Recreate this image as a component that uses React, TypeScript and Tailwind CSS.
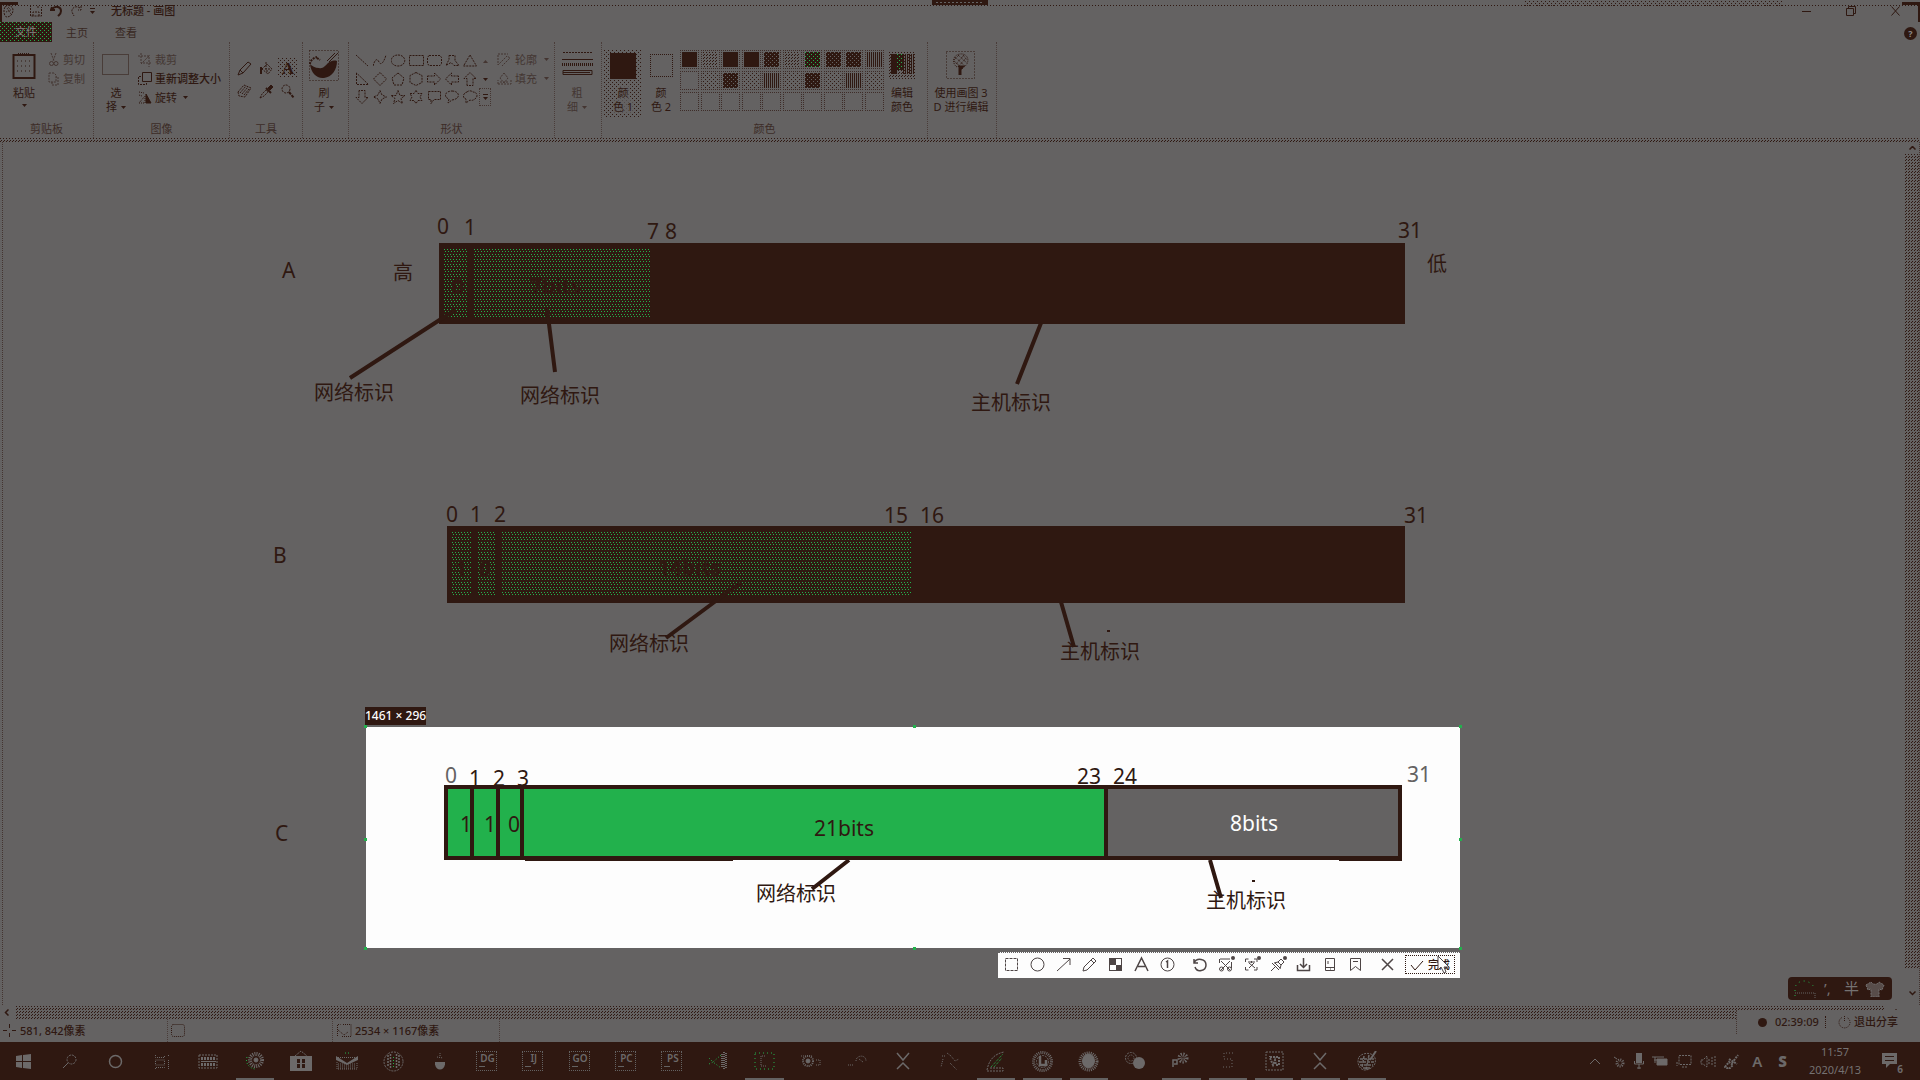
import React from "react";

const UI_FONT = "font-['Noto_Sans','Noto_Sans_CJK_SC',sans-serif]";

const DOTS_SPARSE =
  "[background-image:conic-gradient(at_1px_1px,#0000_75%,#2f1811_0),conic-gradient(at_1px_1px,#0000_75%,#2f1811_0)] [background-size:4px_4px] [background-position:0_0,2px_2px]";
const DOTS_MID =
  "[background-image:conic-gradient(at_1px_1px,#0000_75%,#2f1811_0),conic-gradient(at_1px_1px,#0000_75%,#2f1811_0)] [background-size:3px_3px] [background-position:0_0,1px_2px]";
const DOTS_DENSE =
  "bg-[#2f1811] [background-image:conic-gradient(at_1px_1px,#0000_75%,#646262_0),conic-gradient(at_1px_1px,#0000_75%,#646262_0)] [background-size:4px_4px] [background-position:0_0,2px_2px]";
const DOTS_GREEN =
  "bg-[#2f1811] [background-image:conic-gradient(at_1px_1px,#0000_75%,#22b14c_0),conic-gradient(at_1px_1px,#0000_75%,#22b14c_0)] [background-size:3px_5px] [background-position:0_0,1px_2px]";
const DOTS_GREEN_SPARSE =
  "bg-[#2f1811] [background-image:conic-gradient(at_1px_1px,#0000_75%,#22b14c_0),conic-gradient(at_1px_1px,#0000_75%,#22b14c_0)] [background-size:4px_4px] [background-position:0_0,2px_2px]";
const STRIPES =
  "[background-image:linear-gradient(90deg,#2f1811_1px,#0000_1px)] [background-size:2px_2px]";
const DOTTED_RULE =
  "[background-image:linear-gradient(90deg,#2f1811_1px,#0000_1px)] [background-size:3px_1px]";

type SvgProps = { w: number; h: number; children: React.ReactNode; className?: string };

function Ico({ w, h, children, className = "" }: SvgProps) {
  return (
    <svg
      width={w}
      height={h}
      viewBox={`0 0 ${w} ${h}`}
      fill="none"
      stroke="currentColor"
      aria-hidden="true"
      className={`shrink-0 ${className}`}
    >
      {children}
    </svg>
  );
}

function Caret() {
  return (
    <Ico w={5} h={3}>
      <path d="M0 0h5L2.500 3z" fill="currentColor" stroke="none" />
    </Ico>
  );
}

/* ---------- Title bar and tabs ---------- */

function TitleBar() {
  return (
    <header className="relative flex h-[22px] items-center pl-[3px] pr-5">
      <div className={`absolute inset-x-0 top-[5px] h-px ${DOTTED_RULE}`} />
      <div className="absolute left-0 top-0.5 h-5 w-[18px] border-l-2 border-t-[3px] border-[#2f1811]" />
      <div className="absolute right-0 top-0.5 h-5 w-[18px] border-r-2 border-t-[3px] border-[#2f1811]" />
      <div className="absolute left-[932px] top-0 h-[5px] w-14 bg-[#2f1811]">
        <div className="mx-1 mt-0.5 h-px [background-image:linear-gradient(90deg,#646262_2px,#0000_2px)] [background-size:4px_1px]" />
      </div>
      <div className={`absolute left-[1525px] top-px h-[5px] w-[257px] ${DOTS_SPARSE}`} />
      <div className="flex items-center">
        <Ico w={16} h={14}>
          <path d="M2 3c3-3 8-1 8 3s-3 7-6 7-4-7-2-10z" strokeDasharray="2 1" />
          <path d="M4 4l4 6M3 8l5-2M5 3l3 3" strokeDasharray="1 1" />
        </Ico>
        <button aria-label="保存" className="ml-2.5">
          <Ico w={14} h={14}>
            <path d="M1.500 1v11h11V3M4 12V8h6v4M9 2v3" strokeDasharray="2 1" />
          </Ico>
        </button>
        <button aria-label="撤消" className="ml-[7px]">
          <Ico w={13} h={14}>
            <path d="M2 3l-1 3 4 0M2 5c4-4 9-2 9 2 0 3-2 4-3 5" strokeWidth="2" />
          </Ico>
        </button>
        <button aria-label="恢复" className="ml-[7px]">
          <Ico w={13} h={14}>
            <path d="M11 2v4H8M10 4C6 1 1 4 2 8l2 4" strokeDasharray="2 1" />
          </Ico>
        </button>
        <button aria-label="自定义快速访问工具栏" className="ml-[7px]">
          <Ico w={5} h={6}>
            <path d="M0 .5h5" />
            <path d="M0 3h5L2.500 6z" fill="currentColor" stroke="none" />
          </Ico>
        </button>
        <h1 className="ml-4 text-[11px] font-medium leading-4">无标题 - 画图</h1>
      </div>
      <div className="ml-auto flex items-center gap-[35px]">
        <button aria-label="最小化">
          <Ico w={9} h={9}><path d="M0 4.500h9" /></Ico>
        </button>
        <button aria-label="还原">
          <Ico w={10} h={10}><path d="M.5 2.500h7v7h-7zM2.500 2V.500h7v7H8" /></Ico>
        </button>
        <button aria-label="关闭">
          <Ico w={9} h={10}><path d="M.5.5l8 9M8.500.5l-8 9" /></Ico>
        </button>
      </div>
    </header>
  );
}

function Tabs() {
  return (
    <nav className="flex h-5 items-center pr-[3px] text-[11px] leading-4">
      <button className={`h-full w-[52px] text-[#807d7d] ${DOTS_GREEN_SPARSE}`}>文件</button>
      <button className="ml-3.5 mt-0.5 opacity-80">主页</button>
      <button className="ml-[27px] mt-0.5 opacity-80">查看</button>
      <button
        aria-label="帮助"
        className="ml-auto mt-0.5 flex size-[13px] items-center justify-center rounded-full bg-[#2f1811] text-[9px] font-bold leading-none text-[#8a8787]"
      >
        ?
      </button>
    </nav>
  );
}

/* ---------- Ribbon ---------- */

type GroupProps = { label?: string; className: string; children: React.ReactNode };

function Group({ label, className, children }: GroupProps) {
  return (
    <section className={`flex shrink-0 flex-col border-r border-dotted border-[#2f1811]/50 ${className}`}>
      <div className="flex h-[79px] items-start pt-2">{children}</div>
      <h2 className="text-center text-[11px] leading-4 opacity-75">{label}</h2>
    </section>
  );
}

function Clipboard() {
  return (
    <Group label="剪贴板" className="w-[94px]">
      <button className="ml-3 flex w-6 flex-col items-center text-[11px] leading-3.5">
        <Ico w={24} h={32}>
          <rect x="1.500" y="5" width="21" height="23" strokeWidth="2" />
          <path d="M6 4.500h12" strokeDasharray="1 1" strokeWidth="3" />
          <path d="M5 11h14M5 16h14M5 21h14" strokeDasharray="1 3" />
        </Ico>
        <span className="mt-1">粘贴</span>
        <span className="mt-1"><Caret /></span>
      </button>
      <div className="ml-3 flex flex-col text-[11px] leading-4 opacity-60">
        <button className="flex h-[19px] items-center gap-1">
          <Ico w={11} h={15}>
            <path d="M3 1l3 8M8 1L5 9" strokeDasharray="2 1" />
            <circle cx="3.500" cy="11.500" r="2" />
            <circle cx="8" cy="11.500" r="2" />
          </Ico>
          剪切
        </button>
        <button className="flex h-[19px] items-center gap-1">
          <Ico w={11} h={14}>
            <path d="M1 1h5l2 2v7H1zM4 10v3h6V5H8" strokeDasharray="2 1" />
          </Ico>
          复制
        </button>
      </div>
    </Group>
  );
}

function ImageGroup() {
  return (
    <Group label="图像" className="w-[136px]">
      <button className="ml-2 flex w-7 flex-col items-center text-[11px] leading-3.5">
        <Ico w={28} h={32}>
          <rect x=".5" y="4.500" width="26" height="20" strokeDasharray="1 1" />
        </Ico>
        <span className="mt-1">选</span>
        <span className="flex items-center gap-1">择<Caret /></span>
      </button>
      <div className="ml-2 flex flex-col text-[11px] leading-4">
        <button className="flex h-[19px] items-center gap-0.5 opacity-60">
          <Ico w={15} h={14}>
            <path d="M3 0v10h11M0 3h11v11M3 11l9-9" strokeDasharray="2 1" />
          </Ico>
          裁剪
        </button>
        <button className="flex h-[19px] items-center gap-0.5 font-medium">
          <Ico w={15} h={14}>
            <path d="M4.500.5h9v9h-9z" />
            <path d="M3 4.500H.5v8h8V11" strokeDasharray="2 1" />
          </Ico>
          重新调整大小
        </button>
        <button className="flex h-[19px] items-center gap-0.5">
          <Ico w={15} h={14}>
            <path d="M8 12V3l5 9z" fill="currentColor" />
            <path d="M1 1l5 1M1 4l3 1M1 12h6V5z" strokeDasharray="1 1" />
          </Ico>
          旋转
          <span className="ml-1"><Caret /></span>
        </button>
      </div>
    </Group>
  );
}

function Tools() {
  return (
    <Group label="工具" className="w-[73px]">
      <div className="ml-1 mt-2 grid grid-cols-3 gap-x-0.5 gap-y-[3px]">
        <button aria-label="铅笔" className="flex size-5 items-center justify-center">
          <Ico w={15} h={15}><path d="M1 14l2-5 8-8 3 2-8 9zM3 9l3 3" /></Ico>
        </button>
        <button aria-label="用颜色填充" className="flex size-5 items-center justify-center">
          <Ico w={15} h={15}>
            <path d="M3 8l5-5 5 5-4 5zM7 1v7M6 8l5 0M7 10l3 0" strokeDasharray="2 1" />
            <path d="M2 6v7" strokeWidth="2" />
          </Ico>
        </button>
        <button
          aria-label="文本"
          className={`flex size-5 items-center justify-center font-['Liberation_Serif',serif] text-[17px] font-bold leading-none ${DOTS_SPARSE}`}
        >
          A
        </button>
        <button aria-label="橡皮擦" className="flex size-5 items-center justify-center">
          <Ico w={15} h={14}>
            <path d="M1 8l6-7 7 3-6 9-6-1z" strokeDasharray="2 1" />
            <path d="M3 9l6-7M5 10l6-7M7 11l5-6" strokeDasharray="2 1" />
          </Ico>
        </button>
        <button aria-label="颜色选取器" className="flex size-5 items-center justify-center">
          <Ico w={15} h={15}>
            <path d="M1 14l2-4 4-4 2 2-4 4z" strokeDasharray="2 1" />
            <path d="M9 4l3-3 2 2-3 3z" fill="currentColor" />
            <path d="M7 4l5 5" strokeWidth="2" />
          </Ico>
        </button>
        <button aria-label="放大镜" className="flex size-5 items-center justify-center">
          <Ico w={14} h={15}>
            <circle cx="5" cy="5" r="4" strokeDasharray="2 1" />
            <path d="M8 8l5 6" strokeWidth="2" strokeDasharray="3 1" />
          </Ico>
        </button>
      </div>
    </Group>
  );
}

function Brushes() {
  return (
    <Group className="w-[46px]">
      <button className="ml-1.5 flex w-[30px] flex-col items-center text-[11px] leading-3.5">
        <Ico w={30} h={32}>
          <rect x=".5" y=".5" width="29" height="30" strokeDasharray="1 2" />
          <path
            d="M1 14c1 9 7 15 14 14 8-1 13-8 13-17-4-1-6 0-9 2-3 3-5 6-9 5-4 0-7-2-9-4z"
            fill="currentColor"
            stroke="none"
          />
          <path d="M29 3l-9 9M26 3l-8 8" />
          <path d="M1 14c0-3 3-6 7-7M8 8l3 2" strokeWidth="2" strokeDasharray="2 1" />
        </Ico>
        <span className="mt-1">刷</span>
        <span className="flex items-center gap-1">子<Caret /></span>
      </button>
    </Group>
  );
}

const SHAPES: { name: string; d: string }[] = [
  { name: "直线", d: "M1 1l12 11" },
  { name: "曲线", d: "M0 12c2-7 4-8 6-4s5 0 7-7" },
  { name: "椭圆形", d: "M7 1c9 0 9 11 0 11s-9-11 0-11z" },
  { name: "矩形", d: "M.5 1.500h14v10H.5z" },
  { name: "圆角矩形", d: "M2 1.500h11l1.500 2v6l-1.500 2H2L.5 9.500v-6z" },
  { name: "多边形", d: "M4 1.500h6v5l4 5H9l-3-3-5 3 3-6z" },
  { name: "三角形", d: "M7 1l6.500 11H.5z" },
  { name: "直角三角形", d: "M1.500 1v11.500h12z" },
  { name: "菱形", d: "M7 .5l6.500 6.500L7 13.500.5 7z" },
  { name: "五边形", d: "M7 1l6 5-2 7H3L1 6z" },
  { name: "六边形", d: "M7 .5l6 3v7l-6 3-6-3v-7z" },
  { name: "右箭头", d: "M.5 4h7V1l6 6-6 6v-3h-7z" },
  { name: "左箭头", d: "M13.500 4h-7V1l-6 6 6 6v-3h7z" },
  { name: "上箭头", d: "M4 13.500v-7H1L7 .5l6 6h-3v7z" },
  { name: "下箭头", d: "M4 .5v7H1l6 6 6-6h-3v-7z" },
  { name: "四角星形", d: "M7 .5l2 4.500 4.500 2L9 9l-2 4.500L5 9 .5 7 5 5z" },
  { name: "五角星形", d: "M7 .5l2 5h5l-4 3 1.500 5L7 10.500l-4.500 3L4 8.500l-4-3h5z" },
  { name: "六角星形", d: "M7 .5l2 3h4l-2 3.500 2 3.500H9l-2 3-2-3H1L3 7 1 3.500h4z" },
  { name: "圆角矩形标注", d: "M1.500 1.500h12v8H7l-3 4v-4H1.500z" },
  { name: "椭圆形标注", d: "M7 1c8 0 9 8 0 9l-4 3 1-4C-2 7 0 1 7 1z" },
  { name: "云形标注", d: "M4 2c2-2 5-1 6 0 4 0 5 4 3 6s-4 3-6 2l-4 3 0-4C-1 8 0 3 4 2z" },
];

function ShapesGroup() {
  return (
    <Group label="形状" className="w-[206px]">
      <div className="ml-1 mt-0.5 grid grid-cols-7">
        {SHAPES.map((s) => (
          <button key={s.name} aria-label={s.name} className="flex h-[18px] w-[18px] items-center justify-center">
            <Ico w={15} h={14}>
              <path d={s.d} strokeDasharray="2 1" />
            </Ico>
          </button>
        ))}
      </div>
      <div className="mt-0.5 flex w-3 flex-col">
        <button aria-label="向上滚动" className="flex h-[18px] items-center justify-center opacity-60">
          <Ico w={5} h={3}><path d="M0 3h5L2.500 0z" fill="currentColor" stroke="none" /></Ico>
        </button>
        <button aria-label="向下滚动" className="flex h-[18px] items-center justify-center"><Caret /></button>
        <button
          aria-label="更多形状"
          className="flex h-[18px] items-center justify-center border border-dotted border-[#2f1811]/60"
        >
          <Ico w={5} h={6}>
            <path d="M0 .5h5" />
            <path d="M0 3h5L2.500 6z" fill="currentColor" stroke="none" />
          </Ico>
        </button>
      </div>
      <div className="ml-1.5 flex flex-col text-[11px] leading-4 opacity-60">
        <button className="flex h-[19px] items-center gap-[3px]">
          <Ico w={15} h={14}><path d="M1 1h10M1 2v10l9-9 3 2-8 8" strokeDasharray="2 1" /></Ico>
          轮廓
          <span className="ml-1"><Caret /></span>
        </button>
        <button className="flex h-[19px] items-center gap-[3px]">
          <Ico w={15} h={14}><path d="M7 1l4 5-4 5-4-5zM1 12h13V8M1 12V8M3 10h8" strokeDasharray="2 1" /></Ico>
          填充
          <span className="ml-1"><Caret /></span>
        </button>
      </div>
    </Group>
  );
}

function Thickness() {
  return (
    <Group className="w-[47px]">
      <button className="ml-1.5 flex w-8 flex-col items-center text-[11px] leading-3.5">
        <Ico w={31} h={32}>
          <path d="M1 2.500h30" strokeDasharray="2 1" />
          <path d="M0 9.500h31" />
          <path d="M0 14.500h31" strokeWidth="3" strokeDasharray="1 1" />
          <path d="M1 20.500h29v4H1z" />
          <path d="M1 22.500h27" strokeWidth="1" />
        </Ico>
        <span className="mt-1 opacity-60">粗</span>
        <span className="flex items-center gap-1 opacity-60">细<Caret /></span>
      </button>
    </Group>
  );
}

const EMPTY = "";
const SOLID = "bg-[#2f1811]";
const PALETTE: { name: string; fill: string }[] = [
  { name: "黑色", fill: SOLID },
  { name: "灰色-50%", fill: DOTS_MID },
  { name: "深红色", fill: SOLID },
  { name: "红色", fill: SOLID },
  { name: "橙色", fill: DOTS_DENSE },
  { name: "黄色", fill: DOTS_MID },
  { name: "绿色", fill: DOTS_GREEN_SPARSE },
  { name: "青绿", fill: DOTS_DENSE },
  { name: "靛蓝", fill: DOTS_DENSE },
  { name: "紫色", fill: STRIPES },
  { name: "白色", fill: EMPTY },
  { name: "灰色-25%", fill: DOTS_SPARSE },
  { name: "褐色", fill: DOTS_DENSE },
  { name: "玫瑰色", fill: DOTS_SPARSE },
  { name: "金色", fill: STRIPES },
  { name: "浅黄色", fill: DOTS_SPARSE },
  { name: "酸橙色", fill: DOTS_DENSE },
  { name: "淡青绿色", fill: DOTS_SPARSE },
  { name: "蓝灰色", fill: STRIPES },
  { name: "淡紫色", fill: DOTS_SPARSE },
  ...Array.from({ length: 10 }, (_, i) => ({ name: `自定义 ${i + 1}`, fill: EMPTY })),
];

function Colors() {
  return (
    <Group label="颜色" className="w-[326px]">
      <button className={`ml-0.5 flex h-[68px] w-[38px] flex-col items-center text-[11px] leading-3.5 ${DOTS_SPARSE}`}>
        <span className="mt-[3px] size-[26px] bg-[#2f1811]" />
        <span className="mt-[7px] bg-[#646262]/70">颜</span>
        <span className="bg-[#646262]/70">色 1</span>
      </button>
      <button className="ml-1 flex h-[68px] w-[30px] flex-col items-center text-[11px] leading-3.5">
        <span className="mt-1 size-[23px] border border-dotted border-[#2f1811]" />
        <span className="mt-[9px]">颜</span>
        <span>色 2</span>
      </button>
      <div className="ml-1 grid w-[205px] grid-cols-10 gap-y-0.5">
        {PALETTE.map((c) => (
          <button
            key={c.name}
            aria-label={c.name}
            className="size-[19px] border border-dotted border-[#2f1811]/70 p-px"
          >
            <span className={`block size-full ${c.fill}`} />
          </button>
        ))}
      </div>
      <button className="ml-[3px] flex w-7 flex-col items-center text-[11px] leading-3.5">
        <span className={`mb-[7px] mt-0.5 block size-[27px] p-0.5 ${DOTS_MID}`}>
          <span className="flex h-full">
            <span className="h-5 w-1.5 bg-[#2f1811]" />
            <span className={`h-4 w-1.5 ${DOTS_GREEN_SPARSE}`} />
            <span className={`h-5 w-[11px] ${STRIPES}`} />
          </span>
        </span>
        <span>编辑</span>
        <span>颜色</span>
      </button>
    </Group>
  );
}

function Paint3D() {
  return (
    <Group className="w-[69px]">
      <button className="ml-0.5 flex w-[62px] flex-col items-center text-[11px] leading-3.5">
        <Ico w={30} h={32}>
          <rect x=".5" y="1.500" width="28" height="27" strokeDasharray="1 2" />
          <path
            d="M11 17c-5-3-5-12 3-13s11 8 4 13M9 7l10 9M8 11l7 6M12 5l9 8M17 5l4 5M12 17l8-9M10 14l8-9M8 10l5-5"
            strokeDasharray="1 1"
          />
          <path d="M12 16h6l-2 3h-2z" fill="currentColor" />
          <path d="M14 18v7" strokeWidth="3" />
        </Ico>
        <span className="mt-1 whitespace-nowrap">使用画图 3</span>
        <span className="whitespace-nowrap">D 进行编辑</span>
      </button>
    </Group>
  );
}

function Ribbon() {
  return (
    <div>
      <div className="flex h-24">
        <Clipboard />
        <ImageGroup />
        <Tools />
        <Brushes />
        <ShapesGroup />
        <Thickness />
        <Colors />
        <Paint3D />
      </div>
      <div className={`h-1 ${DOTS_MID}`} />
    </div>
  );
}

/* ---------- Drawing canvas ---------- */

type Mark = { x: number; y: number; text: string; tone?: "grey" | "white"; strong?: boolean };

const MARKS: Mark[] = [
  { x: 282, y: 128, text: "A" },
  { x: 437, y: 84, text: "0" },
  { x: 464, y: 85, text: "1" },
  { x: 647, y: 89, text: "7" },
  { x: 665, y: 89, text: "8" },
  { x: 1398, y: 88, text: "31" },
  { x: 452, y: 144, text: "0", strong: true },
  { x: 530, y: 144, text: "7bits", strong: true },
  { x: 273, y: 413, text: "B" },
  { x: 446, y: 372, text: "0" },
  { x: 470, y: 372, text: "1" },
  { x: 494, y: 372, text: "2" },
  { x: 884, y: 373, text: "15" },
  { x: 920, y: 373, text: "16" },
  { x: 1404, y: 373, text: "31" },
  { x: 455, y: 426, text: "1", strong: true },
  { x: 479, y: 426, text: "0", strong: true },
  { x: 658, y: 425, text: "14bits", strong: true },
  { x: 275, y: 691, text: "C" },
];

const SELECTED_MARKS: Mark[] = [
  { x: 445, y: 633, text: "0", tone: "grey" },
  { x: 469, y: 636, text: "1" },
  { x: 493, y: 636, text: "2" },
  { x: 517, y: 636, text: "3" },
  { x: 1077, y: 634, text: "23" },
  { x: 1113, y: 634, text: "24" },
  { x: 1407, y: 632, text: "31", tone: "grey" },
  { x: 460, y: 682, text: "1" },
  { x: 484, y: 682, text: "1" },
  { x: 508, y: 682, text: "0" },
  { x: 814, y: 686, text: "21bits" },
  { x: 1230, y: 681, text: "8bits", tone: "white" },
];

const NOTES: Mark[] = [
  { x: 393, y: 131, text: "高" },
  { x: 1427, y: 122, text: "低" },
  { x: 314, y: 251, text: "网络标识" },
  { x: 520, y: 254, text: "网络标识" },
  { x: 971, y: 261, text: "主机标识" },
  { x: 609, y: 502, text: "网络标识" },
  { x: 1060, y: 510, text: "主机标识" },
  { x: 756, y: 752, text: "网络标识" },
  { x: 1206, y: 759, text: "主机标识" },
];

const TONES = { grey: "text-[#646262]", white: "text-[#fdfdfd]", dark: "text-[#2f1811]" };

function MarkText({ mark, size }: { mark: Mark; size: string }) {
  return (
    <span
      className={`absolute -translate-y-1/2 whitespace-nowrap leading-6 ${size} ${TONES[mark.tone ?? "dark"]} ${
        mark.strong ? "font-bold" : ""
      }`}
      style={{ left: mark.x, top: mark.y }}
    >
      {mark.text}
    </span>
  );
}

type Cell = { w: string; fill: string };

function BitBar({ place, cells }: { place: string; cells: Cell[] }) {
  return (
    <div className={`absolute flex bg-[#2f1811] ${place}`}>
      {cells.map((c, i) => (
        <span key={i} className={`h-full shrink-0 ${c.w} ${c.fill}`} />
      ))}
    </div>
  );
}

const HANDLES = [
  "left-[-2px] top-[-2px]",
  "left-1/2 top-[-2px]",
  "right-[-2px] top-[-2px]",
  "left-[-2px] top-1/2",
  "right-[-2px] top-1/2",
  "left-[-2px] bottom-[-2px]",
  "left-1/2 bottom-[-2px]",
  "right-[-2px] bottom-[-2px]",
];

function Dot({ x }: { x: number }) {
  return <circle cx={x} cy="2" r="2" fill="currentColor" stroke="none" />;
}

const SNIP_TOOLS: { name: string; icon: React.ReactNode; first?: boolean }[] = [
  { name: "矩形", icon: <rect x="1.500" y="2.500" width="12" height="12" strokeDasharray="3 1" /> },
  { name: "椭圆", icon: <circle cx="7.500" cy="8.500" r="6.500" /> },
  { name: "箭头", icon: <path d="M1 15L14 3M7 2.500h7V9" /> },
  { name: "画笔", icon: <path d="M1 15l1-4 9-9 3 3-9 9zM9 4l3 3" /> },
  {
    name: "马赛克",
    icon: (
      <>
        <rect x="1.500" y="2.500" width="12" height="12" />
        <path d="M2 3h6v6H2zM8 9h6v6H8z" fill="currentColor" stroke="none" />
      </>
    ),
  },
  { name: "文字", icon: <path d="M1 15L7.500 2 14 15M4 10.500h7" strokeWidth="1.500" /> },
  {
    name: "序号",
    icon: (
      <>
        <circle cx="7.500" cy="8.500" r="6.500" />
        <path d="M6 6l1.500-1v7" strokeWidth="1.500" />
      </>
    ),
  },
  { name: "撤销", first: true, icon: <path d="M2 3v4h4M2 7c3-6 12-4 12 2s-9 8-11 2" strokeWidth="1.500" /> },
  {
    name: "屏幕识图",
    icon: (
      <>
        <path d="M2 3h10M1.500 3v4M13.500 6v6M3 5l9 9M12 5l-9 9" />
        <circle cx="3.500" cy="13" r="2" />
        <circle cx="11.500" cy="13" r="2" />
        <Dot x={15} />
      </>
    ),
  },
  {
    name: "翻译",
    icon: (
      <>
        <path d="M1.500 6V3h3M10 3h3v3M1.500 11v3h3M10 14h3v-3M4 6h7M7.500 5v2M5 12l5-5M5 7l6 5" />
        <Dot x={15} />
      </>
    ),
  },
  {
    name: "钉在桌面",
    icon: (
      <>
        <path d="M1 15l5-5M2 7l7 7M4 7l4-1 3-3 3 3-3 3-1 4" />
        <path d="M5 7l5 5M8 6l3 3" />
        <Dot x={15} />
      </>
    ),
  },
  { name: "下载", icon: <path d="M7.500 2v9M4 8l3.500 3.500L11 8M1.500 9v5.500h12V9" strokeWidth="1.500" /> },
  { name: "发送到手机", icon: <path d="M3.500 2.500h9v12h-9zM3.500 11.500h9M8 13h1M6 5v3" /> },
  { name: "收藏", icon: <path d="M2.500 2.500h10v12l-5-4-5 4zM5 5.500h5" /> },
  { name: "取消", first: true, icon: <path d="M2 3l11 11M13 3L2 14" strokeWidth="1.500" /> },
];

function SnipToolbar() {
  return (
    <div
      role="toolbar"
      aria-label="截图工具"
      className="absolute right-0 top-full mt-1 flex h-[26px] w-[462px] items-center border-t border-dotted border-[#646262] bg-[#fdfdfd] pb-0.5 pr-[5px] text-[#4d4545]"
    >
      <div className="flex flex-1 pl-px">
        {SNIP_TOOLS.map((t) => (
          <button
            key={t.name}
            aria-label={t.name}
            className={`flex w-[26px] shrink-0 justify-center ${t.first ? "ml-1.5" : ""}`}
          >
            <Ico w={17} h={17}>{t.icon}</Ico>
          </button>
        ))}
      </div>
      <button className="flex h-[19px] w-[50px] items-center justify-center gap-1 border border-dotted border-[#2f1811] text-[11px] font-medium leading-none text-[#2f1811]">
        <Ico w={14} h={12}><path d="M1 6l4 5 8-9" /></Ico>
        完成
      </button>
      <Ico w={13} h={19} className="absolute right-2.5 top-0.5">
        <path d="M1 1v14l3-3 3 6 2-1-2-5h5z" fill="#fdfdfd" />
      </Ico>
    </div>
  );
}

function Selection() {
  return (
    <div className="absolute left-[366px] top-[585px] h-[221px] w-[1094px] bg-[#fdfdfd]">
      <span className="absolute bottom-full left-[-1px] mb-0.5 flex h-[18px] items-center whitespace-nowrap bg-[#2f1811] text-xs font-medium leading-none text-[#fdfdfd]">
        1461 × 296
      </span>
      {HANDLES.map((h) => (
        <span key={h} className={`absolute size-[3px] bg-[#22b14c] ${h}`} />
      ))}
      <SnipToolbar />
    </div>
  );
}

function Canvas() {
  return (
    <main className="relative min-h-0 flex-1 overflow-hidden">
      <div className="absolute inset-y-0 left-0.5 border-l border-dotted border-[#2f1811]/60" />
      <BitBar
        place="left-[439px] top-[101px] h-[81px] w-[966px] py-1.5 pl-[5px]"
        cells={[
          { w: "w-[23px]", fill: DOTS_GREEN },
          { w: "w-[7px]", fill: SOLID },
          { w: "w-[177px]", fill: DOTS_GREEN },
        ]}
      />
      <BitBar
        place="left-[447px] top-[384px] h-[77px] w-[958px] py-1.5 pl-[5px]"
        cells={[
          { w: "w-[19px]", fill: DOTS_GREEN },
          { w: "w-[7px]", fill: SOLID },
          { w: "w-[17px]", fill: DOTS_GREEN },
          { w: "w-[7px]", fill: SOLID },
          { w: "w-[409px]", fill: DOTS_GREEN },
        ]}
      />
      {MARKS.map((m, i) => (
        <MarkText key={i} mark={m} size="text-[21px]" />
      ))}
      <Selection />
      <BitBar
        place="left-[444px] top-[643px] h-[75px] w-[958px] p-1"
        cells={[
          { w: "w-[22px]", fill: "bg-[#22b14c]" },
          { w: "w-1", fill: SOLID },
          { w: "w-[22px]", fill: "bg-[#22b14c]" },
          { w: "w-1", fill: SOLID },
          { w: "w-[20px]", fill: "bg-[#22b14c]" },
          { w: "w-1", fill: SOLID },
          { w: "w-[580px]", fill: "bg-[#22b14c]" },
          { w: "w-1", fill: SOLID },
          { w: "w-[290px]", fill: "bg-[#646262]" },
        ]}
      />
      {SELECTED_MARKS.map((m, i) => (
        <MarkText key={i} mark={m} size="text-[21px]" />
      ))}
      {NOTES.map((m, i) => (
        <MarkText key={i} mark={m} size="text-[20px]" />
      ))}
      <svg
        width="1500"
        height="800"
        viewBox="0 0 1500 800"
        fill="none"
        stroke="#2f1811"
        strokeWidth="4"
        aria-hidden="true"
        className="pointer-events-none absolute left-0 top-0"
      >
        <path d="M455 168L350 236M547 166L555 230M1041 181L1017 242" />
        <path d="M740 441L666 496M1061 460L1074 505" />
        <path d="M849 718L812 747M1210 718L1221 756" />
        <path d="M1107 489h3M1252 739h3" strokeWidth="2" />
        <path d="M525 717.500h208M1339 717.500h63" strokeWidth="3" />
      </svg>
      <div
        role="toolbar"
        aria-label="输入法"
        className="absolute right-3 top-[835px] flex h-[23px] w-[104px] translate-x-[-1px] items-center rounded bg-[#2f1811] pl-1.5 text-[15px] leading-none text-[#757272]"
      >
        <Ico w={22} h={20} className="text-[#646262]">
          <path d="M1 14h20v5" strokeDasharray="1 1" />
          <path d="M1 17V8C3 4 6 2 10 2s9 3 11 8" stroke="#22b14c" strokeDasharray="1 4" />
        </Ico>
        <span className="ml-2 w-5">’,</span>
        <span>半</span>
        <Ico w={20} h={16} className="ml-1.5">
          <path d="M1 4l5-3c2 3 6 3 8 0l5 3-2 5-3-1v8H6V8L3 9z" fill="currentColor" fillOpacity=".6" strokeDasharray="2 1" />
        </Ico>
      </div>
    </main>
  );
}

function VerticalScrollbar() {
  return (
    <div className="flex w-[15px] shrink-0 flex-col items-center border-r border-dotted border-[#2f1811]/60">
      <button aria-label="向上滚动" className="flex h-3 items-center">
        <Ico w={7} h={4}><path d="M.5 3.500l3-3 3 3" strokeWidth="1.500" /></Ico>
      </button>
      <div className={`h-[814px] w-full ${DOTS_MID}`} />
      <button aria-label="向下滚动" className="mt-auto flex h-3.5 items-start">
        <Ico w={7} h={5}><path d="M.5.5l3 3 3-3" strokeWidth="1.500" /></Ico>
      </button>
    </div>
  );
}

function HorizontalScrollbar() {
  return (
    <div className="flex h-3.5 items-center pl-1 pr-5">
      <button aria-label="向左滚动" className="w-3">
        <Ico w={5} h={7}><path d="M4.500.5l-3 3 3 3" strokeWidth="1.500" /></Ico>
      </button>
      <div className={`h-[13px] flex-1 ${DOTS_MID}`} />
      <button aria-label="向右滚动" className="ml-2.5">
        <Ico w={6} h={7}><path d="M1.500.5l3 3-3 3" strokeWidth="1.500" /></Ico>
      </button>
    </div>
  );
}

/* ---------- Status bar ---------- */

function StatusBar() {
  return (
    <footer className="flex h-[23px] items-center text-[11px] font-medium leading-4">
      <div className="flex h-full w-[168px] items-center gap-1 border-r border-dotted border-[#2f1811]/50 pl-[3px]">
        <Ico w={13} h={13}>
          <path d="M6.500 0v4M6.500 9v4M0 6.500h4M9 6.500h4" />
        </Ico>
        581, 842像素
      </div>
      <div className="flex h-full w-[165px] items-center border-r border-dotted border-[#2f1811]/50 pl-[3px]">
        <Ico w={14} h={13}>
          <rect x=".5" y=".5" width="13" height="12" rx="2" strokeDasharray="1 1" />
        </Ico>
      </div>
      <div className="flex h-full w-[167px] items-center gap-[3px] border-r border-dotted border-[#2f1811]/50 pl-1">
        <Ico w={15} h={13}>
          <path d="M.5 12V.5h3M6 .5h8v12H4M1 6l6 5 4-3" strokeDasharray="1 1" />
        </Ico>
        2534 × 1167像素
      </div>
      <div className="mb-2 ml-auto flex h-6 w-[184px] items-center self-end border-l border-dotted border-[#2f1811]/60 bg-[#646262] pl-[21px]">
        <span className="size-[9px] shrink-0 rounded-full bg-[#2f1811]" />
        <time className="ml-2 w-[50px]">02:39:09</time>
        <span className="h-3 border-l border-dotted border-[#2f1811]" />
        <button className="ml-3 flex items-center gap-[3px] whitespace-nowrap">
          <Ico w={13} h={13}>
            <path d="M4 1.500a5.500 5.500 0 1 0 5 0M6.500 0v6" strokeDasharray="1 1" />
          </Ico>
          退出分享
        </button>
      </div>
    </footer>
  );
}

/* ---------- Taskbar ---------- */

type Task = { name: string; icon: React.ReactNode; open?: boolean };

function Ide({ label }: { label: string }) {
  return (
    <span className="flex h-5 w-[21px] flex-col border border-dotted border-[#646262] pl-0.5 text-[10px] font-semibold leading-3">
      {label}
      <span className="mt-0.5 h-px w-1.5 bg-[#646262]" />
    </span>
  );
}

const TASKS: Task[] = [
  {
    name: "开始",
    icon: (
      <Ico w={15} h={15}>
        <path d="M0 2l6-1v6H0zM7 1l8-1v7H7zM0 8h6v6l-6-1zM7 8h8v7l-8-1z" fill="currentColor" stroke="none" />
      </Ico>
    ),
  },
  { name: "搜索", icon: <Ico w={15} h={15}><circle cx="9.500" cy="5.500" r="4.500" strokeDasharray="2 1" /><path d="M6 9l-5 5" /></Ico> },
  { name: "Cortana", icon: <Ico w={15} h={15}><circle cx="7.500" cy="7.500" r="6" strokeWidth="1.500" /></Ico> },
  { name: "任务视图", icon: <Ico w={16} h={15}><path d="M1.500 1v2.500h9V1M1.500 6h9v5h-9zM1.500 15v-1.500h9V15M14.500 1v2M14.500 6v9" strokeDasharray="1 1" /></Ico> },
  {
    name: "键盘",
    icon: (
      <Ico w={20} h={15}>
        <rect x="1" y="1" width="18" height="13" strokeDasharray="2 1" />
        <path d="M3 4.500h15M3 10.500h15" strokeWidth="3" strokeDasharray="2 1" />
        <path d="M3 7.500h15" />
      </Ico>
    ),
  },
  {
    name: "浏览器",
    open: true,
    icon: (
      <Ico w={19} h={20}>
        <circle cx="11" cy="9" r="6" strokeDasharray="1 1" strokeWidth="4" />
        <circle cx="11" cy="9" r="2" fill="currentColor" />
        <path d="M2 6c-2 6 2 11 8 12" stroke="#22b14c" strokeDasharray="1 2" />
      </Ico>
    ),
  },
  {
    name: "应用商店",
    icon: (
      <Ico w={22} h={22}>
        <path d="M5 6l6-5 6 5" strokeDasharray="2 1" />
        <path d="M0 6h22v15H0z" fill="currentColor" stroke="none" />
        <path d="M7 9h3v4H7zM12 9h3v4h-3zM7 14h3v4H7zM12 14h3v4h-3z" fill="#2f1811" stroke="none" />
      </Ico>
    ),
  },
  {
    name: "邮件",
    icon: (
      <Ico w={22} h={18}>
        <path d="M0 4l11 7L22 4v4l-11 5L0 8z" fill="currentColor" stroke="none" />
        <path d="M0 5.500h22M1 10v7h20v-7M2 12h18M2 14h18M2 16h18" strokeDasharray="1 1" />
        <path d="M9 1h4" stroke="#22b14c" strokeDasharray="1 2" />
      </Ico>
    ),
  },
  {
    name: "指纹",
    icon: (
      <Ico w={21} h={21}>
        <circle cx="10.500" cy="10.500" r="9.500" strokeDasharray="2 1" />
        <path d="M5 4v12M7.500 3v15M13.500 3v15M16 4v12" strokeWidth="1.500" strokeDasharray="2 1" />
        <path d="M10.500 6v12" stroke="#22b14c" strokeDasharray="1 2" />
      </Ico>
    ),
  },
  { name: "水滴", icon: <Ico w={10} h={18}><path d="M0 10h10c1 10-11 10-10 0z" fill="currentColor" stroke="none" /><path d="M5 1v4M2 5l6 1" strokeDasharray="1 1" /></Ico> },
  { name: "DataGrip", icon: <Ide label="DG" /> },
  { name: "IntelliJ", icon: <Ide label="IJ" /> },
  { name: "GoLand", icon: <Ide label="GO" /> },
  { name: "PyCharm", icon: <Ide label="PC" /> },
  { name: "PhpStorm", icon: <Ide label="PS" /> },
  { name: "编辑器", icon: <Ico w={20} h={20}><path d="M14 3v14M18 2v16M16 1v18" strokeWidth="2" strokeDasharray="1 1" /><path d="M13 4l-8 7 8 6M1 7l4 4-4 2" stroke="#22b14c" strokeDasharray="1 2" /></Ico> },
  { name: "终端", open: true, icon: <Ico w={21} h={20}><rect x="1" y="2" width="19" height="16" strokeDasharray="1 3" stroke="#22b14c" /><path d="M11 5H7v10h5" strokeDasharray="1 1" /></Ico> },
  { name: "相机", icon: <Ico w={21} h={16}><circle cx="8" cy="8" r="5" strokeWidth="2" strokeDasharray="1 1" /><circle cx="8" cy="8" r="2" fill="currentColor" /><path d="M1 3h12M16 7h4v5h-5" strokeDasharray="1 1" /></Ico> },
  { name: "网盘", icon: <Ico w={20} h={16}><path d="M9 8c0-6 10-7 10 0M1 12h5M12 6l4 3" strokeDasharray="1 1" /></Ico> },
  { name: "XShell", icon: <Ico w={15} h={18}><path d="M1 1l6 7 6-7M1 17l6-6 6 6" strokeWidth="1.500" /></Ico> },
  { name: "导图", icon: <Ico w={20} h={20}><path d="M2 5h4M7 2l4 3 4 5 4-2M3 8l-2 8M10 12l7 7" strokeDasharray="1 1" /></Ico> },
  { name: "绘图", open: true, icon: <Ico w={20} h={22}><path d="M1 20C3 10 8 4 18 2M4 18h13v3H1" strokeDasharray="2 1" /><path d="M5 17L17 4M8 17l8-9" stroke="#22b14c" strokeDasharray="1 1" /></Ico> },
  {
    name: "联系人",
    open: true,
    icon: (
      <Ico w={21} h={21}>
        <circle cx="10.500" cy="10.500" r="9" strokeDasharray="1 1" strokeWidth="3" />
        <circle cx="10.500" cy="10.500" r="6" strokeDasharray="2 1" />
        <path d="M8 5v9h6V9" strokeWidth="2.500" />
      </Ico>
    ),
  },
  {
    name: "QQ",
    open: true,
    icon: (
      <Ico w={21} h={21}>
        <circle cx="10.500" cy="10.500" r="8.500" strokeWidth="3" strokeDasharray="1 1" />
        <ellipse cx="10.500" cy="10" rx="6" ry="7" fill="currentColor" />
      </Ico>
    ),
  },
  {
    name: "微信",
    icon: (
      <Ico w={22} h={18}>
        <circle cx="7" cy="6" r="5.500" strokeDasharray="2 1" />
        <circle cx="7" cy="6" r="3" strokeDasharray="1 1" />
        <circle cx="15" cy="11" r="6" fill="currentColor" stroke="none" />
      </Ico>
    ),
  },
  { name: "播放器", open: true, icon: <Ico w={20} h={18}><path d="M2 15V8h4v4H3" strokeWidth="1.500" /><circle cx="12" cy="6" r="3" strokeWidth="5" strokeDasharray="1 1" /></Ico> },
  { name: "文稿", open: true, icon: <Ico w={13} h={18}><path d="M12 1H3v6h8v8H1" strokeDasharray="1 2" /></Ico> },
  { name: "文档", open: true, icon: <Ico w={19} h={20}><rect x="1" y="1" width="17" height="18" strokeDasharray="2 1" /><path d="M5 6h9v8h-3l-1-5-2 5-3-7z" strokeDasharray="2 1" strokeWidth="2" /></Ico> },
  { name: "Xftp", open: true, icon: <Ico w={15} h={18}><path d="M1 1l6 7 6-7M1 17l6-6 6 6" strokeWidth="1.500" /></Ico> },
  {
    name: "画图",
    open: true,
    icon: (
      <Ico w={22} h={20}>
        <path d="M3 6c4-5 14-5 16 1s-3 11-9 12S0 12 3 6z" strokeDasharray="2 1" />
        <path d="M4 8h14M3 11h16M4 14h13M7 17h8M8 5l-2 12M13 4l-3 15" strokeWidth="1.500" strokeDasharray="3 1" />
        <path d="M20 0l-6 9" strokeWidth="2" />
      </Ico>
    ),
  },
];

function Tray() {
  return (
    <div className="ml-auto flex h-full items-center pr-5">
      <div className="flex items-center gap-2">
        <Ico w={12} h={7}><path d="M1 6l5-5 5 5" /></Ico>
        <Ico w={13} h={13} className="ml-1"><circle cx="7" cy="8" r="3" strokeWidth="3" strokeDasharray="1 1" /><path d="M1 2l3 2" /></Ico>
        <Ico w={10} h={16}><path d="M2 0h6v10H2z" fill="currentColor" stroke="none" /><path d="M.5 8v3h9V8M5 11v5M3 15h4" /></Ico>
        <Ico w={16} h={12}><path d="M5 4h10v6H5z" fill="currentColor" /><path d="M0 2h12M2 5h3M3 2v6" /></Ico>
        <Ico w={16} h={14}><path d="M3 1.500h12v9H3zM6 13h6M1 8v4" strokeDasharray="2 1" /></Ico>
        <Ico w={16} h={13}><path d="M1 5h2l4-4v11L3 9H1zM9 4v5M12 2v9M15 1v11" strokeDasharray="2 1" /></Ico>
        <Ico w={16} h={16}><path d="M1 14l4-5 4 3-4 4zM8 10l6-8M5 6l8 5" strokeDasharray="2 1" strokeWidth="2" /></Ico>
      </div>
      <span className="ml-3 text-[15px] font-semibold leading-none">A</span>
      <span className="ml-4 text-[15px] font-black leading-none">S</span>
      <div className="ml-[17px] flex w-[62px] flex-col items-center text-[11px] leading-[18px] text-[#757272]">
        <time>11:57</time>
        <time>2020/4/13</time>
      </div>
      <button aria-label="通知" className="relative ml-4">
        <Ico w={18} h={18}>
          <path d="M0 1h15v11H8l-4 4v-4H0z" fill="currentColor" stroke="none" />
          <path d="M3 4.500h9M3 8.500h9" stroke="#2f1811" />
        </Ico>
        <span className="absolute -bottom-1 -right-1 bg-[#2f1811] px-px text-[10px] font-bold leading-[10px]">6</span>
      </button>
    </div>
  );
}

function Taskbar() {
  return (
    <nav aria-label="任务栏" className="flex h-[38px] shrink-0 bg-[#2f1811] text-[#6c6969]">
      <div className="grid h-full w-[1390px] shrink-0 grid-cols-[repeat(30,minmax(0,1fr))]">
        {TASKS.map((t) => (
          <button key={t.name} aria-label={t.name} className="relative flex items-center justify-center">
            {t.icon}
            {t.open && <span className="absolute inset-x-1 bottom-0 h-0.5 bg-[#646262]" />}
          </button>
        ))}
      </div>
      <Tray />
    </nav>
  );
}

export default function App() {
  return (
    <div className={`flex h-screen w-full flex-col overflow-hidden bg-[#646262] text-[#2f1811] ${UI_FONT}`}>
      <TitleBar />
      <Tabs />
      <Ribbon />
      <div className="flex min-h-0 flex-1">
        <Canvas />
        <VerticalScrollbar />
      </div>
      <HorizontalScrollbar />
      <StatusBar />
      <Taskbar />
    </div>
  );
}
